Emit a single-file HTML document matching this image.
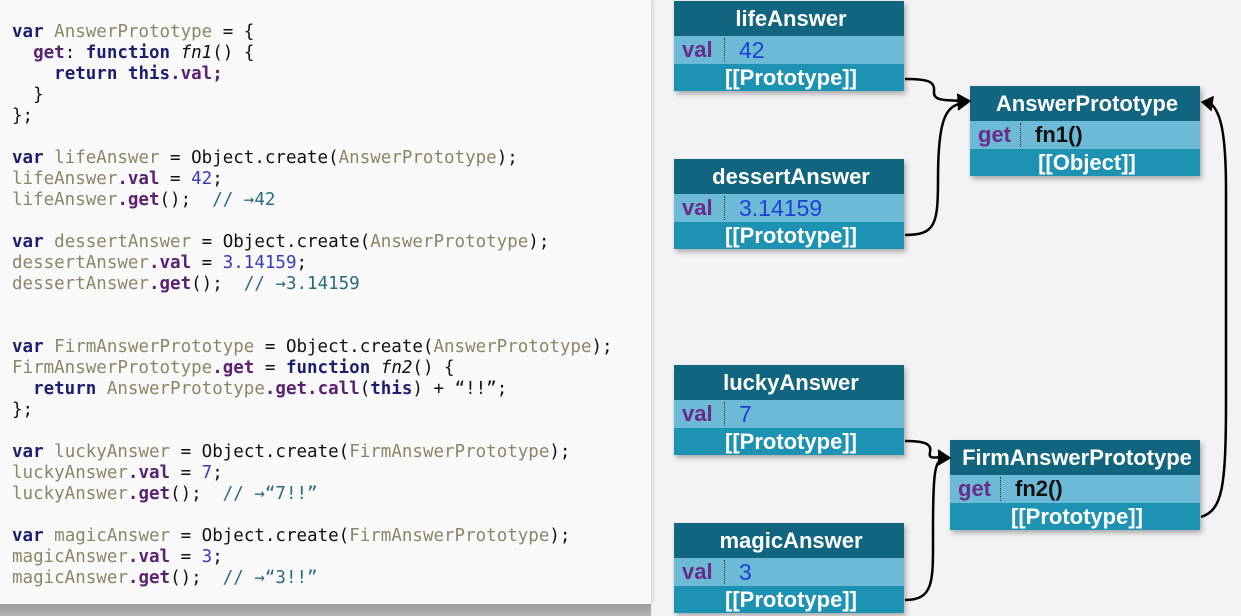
<!DOCTYPE html>
<html><head><meta charset="utf-8"><style>
html,body{margin:0;padding:0}
body{width:1241px;height:616px;overflow:hidden;background:#f3f3f5;position:relative;font-family:"Liberation Sans",sans-serif}
#code{position:absolute;left:0;top:0;width:651px;height:604px;background:#f9f9f9;box-shadow:2px 0 3px rgba(0,0,0,.12)}
#bar{position:absolute;left:0;top:604px;width:651px;height:12px;background:linear-gradient(#9a9a9a,#b5b5b5)}
.cl{position:absolute;left:12px;white-space:pre;font-family:"DejaVu Sans Mono",monospace;font-size:17.5px;line-height:21px;color:#111}
.k{color:#1e1e6e;font-weight:bold}
.i{color:#8c8566}
.n{color:#3a3ab8}
.p{color:#5c2272;font-weight:bold}
.c{color:#2a6a80}
.f{font-style:italic}
.box{position:absolute;box-shadow:2px 3px 5px rgba(0,0,0,.3);color:#fff;font-weight:bold}
.h{background:#11657e;text-align:center;font-size:22px;line-height:35px;height:35px;padding-left:4px}
.v{background:#6cbad5;height:28px;line-height:28px;font-size:22px;position:relative}
.v .a{position:absolute;left:8px;color:#6a2a8c}
.v .sep{position:absolute;left:50px;top:2px;height:24px;border-left:1px dotted #333}
.v .b{position:absolute;left:65px;color:#1f3fd4;font-weight:normal;font-size:23px}
.pr{background:#1d92b3;height:27px;line-height:27px;text-align:center;font-size:22px;padding-left:4px}
</style></head><body>
<div id="code">
<div class="cl" style="top:22px"><span class="k">var</span> <span class="i">AnswerPrototype</span> = {</div>
<div class="cl" style="top:43px">  <span class="p">get</span>: <span class="k">function</span> <span class="f">fn1</span>() {</div>
<div class="cl" style="top:64px">    <span class="k">return this</span><span class="p">.val;</span></div>
<div class="cl" style="top:85px">  }</div>
<div class="cl" style="top:106px">};</div>
<div class="cl" style="top:148px"><span class="k">var</span> <span class="i">lifeAnswer</span> = Object.create(<span class="i">AnswerPrototype</span>);</div>
<div class="cl" style="top:169px"><span class="i">lifeAnswer</span><span class="p">.val</span> = <span class="n">42</span>;</div>
<div class="cl" style="top:190px"><span class="i">lifeAnswer</span><span class="p">.get</span>();  <span class="c">// →42</span></div>
<div class="cl" style="top:232px"><span class="k">var</span> <span class="i">dessertAnswer</span> = Object.create(<span class="i">AnswerPrototype</span>);</div>
<div class="cl" style="top:253px"><span class="i">dessertAnswer</span><span class="p">.val</span> = <span class="n">3.14159</span>;</div>
<div class="cl" style="top:274px"><span class="i">dessertAnswer</span><span class="p">.get</span>();  <span class="c">// →3.14159</span></div>
<div class="cl" style="top:337px"><span class="k">var</span> <span class="i">FirmAnswerPrototype</span> = Object.create(<span class="i">AnswerPrototype</span>);</div>
<div class="cl" style="top:358px"><span class="i">FirmAnswerPrototype</span><span class="p">.get</span> = <span class="k">function</span> <span class="f">fn2</span>() {</div>
<div class="cl" style="top:379px">  <span class="k">return</span> <span class="i">AnswerPrototype</span><span class="p">.get.call</span>(<span class="k">this</span>) + “!!”;</div>
<div class="cl" style="top:400px">};</div>
<div class="cl" style="top:442px"><span class="k">var</span> <span class="i">luckyAnswer</span> = Object.create(<span class="i">FirmAnswerPrototype</span>);</div>
<div class="cl" style="top:463px"><span class="i">luckyAnswer</span><span class="p">.val</span> = <span class="n">7</span>;</div>
<div class="cl" style="top:484px"><span class="i">luckyAnswer</span><span class="p">.get</span>();  <span class="c">// →“7!!”</span></div>
<div class="cl" style="top:526px"><span class="k">var</span> <span class="i">magicAnswer</span> = Object.create(<span class="i">FirmAnswerPrototype</span>);</div>
<div class="cl" style="top:547px"><span class="i">magicAnswer</span><span class="p">.val</span> = <span class="n">3</span>;</div>
<div class="cl" style="top:568px"><span class="i">magicAnswer</span><span class="p">.get</span>();  <span class="c">// →“3!!”</span></div>
</div>
<div id="bar"></div>

<div class="box" style="left:674px;top:1px;width:230px"><div class="h">lifeAnswer</div><div class="v"><span class="a">val</span><span class="sep"></span><span class="b">42</span></div><div class="pr">[[Prototype]]</div></div>
<div class="box" style="left:674px;top:159px;width:230px"><div class="h">dessertAnswer</div><div class="v"><span class="a">val</span><span class="sep"></span><span class="b">3.14159</span></div><div class="pr">[[Prototype]]</div></div>
<div class="box" style="left:674px;top:365px;width:230px"><div class="h">luckyAnswer</div><div class="v"><span class="a">val</span><span class="sep"></span><span class="b">7</span></div><div class="pr">[[Prototype]]</div></div>
<div class="box" style="left:674px;top:523px;width:230px"><div class="h">magicAnswer</div><div class="v"><span class="a">val</span><span class="sep"></span><span class="b">3</span></div><div class="pr">[[Prototype]]</div></div>
<div class="box" style="left:970px;top:86px;width:230px"><div class="h">AnswerPrototype</div><div class="v"><span class="a" style="left:8px">get</span><span class="sep"></span><span class="b" style="color:#111;font-weight:bold;font-size:22px">fn1()</span></div><div class="pr">[[Object]]</div></div>
<div class="box" style="left:950px;top:440px;width:250px"><div class="h">FirmAnswerPrototype</div><div class="v"><span class="a">get</span><span class="sep"></span><span class="b" style="color:#111;font-weight:bold;font-size:22px">fn2()</span></div><div class="pr">[[Prototype]]</div></div>

<svg width="1241" height="616" style="position:absolute;left:0;top:0" fill="none" stroke="#000" stroke-width="2.5">
<path d="M905 79 C930 79 935 82 934 92 C933 102 950 100 964 101"/>
<path d="M905 235 C935 235 938 225 938 180 C938 120 945 105 964 103"/>
<path d="M905 441 C925 441 932 444 930 452 C928 460 935 457 944 457"/>
<path d="M905 600 C935 600 933 580 933 530 C933 470 935 460 944 459"/>
<path d="M1201 517 C1222 510 1226 490 1226 400 L1226 190 C1226 130 1220 108 1208 102"/>
<path d="M957 94 L970 101 L958 110" fill="#000" stroke-width="1.5"/>
<path d="M938 450 L950 458 L938 465" fill="#000" stroke-width="1.5"/>
<path d="M1202 102 L1213 97 L1211 110 Z" fill="#000" stroke-width="1.5"/>
</svg>
</body></html>
